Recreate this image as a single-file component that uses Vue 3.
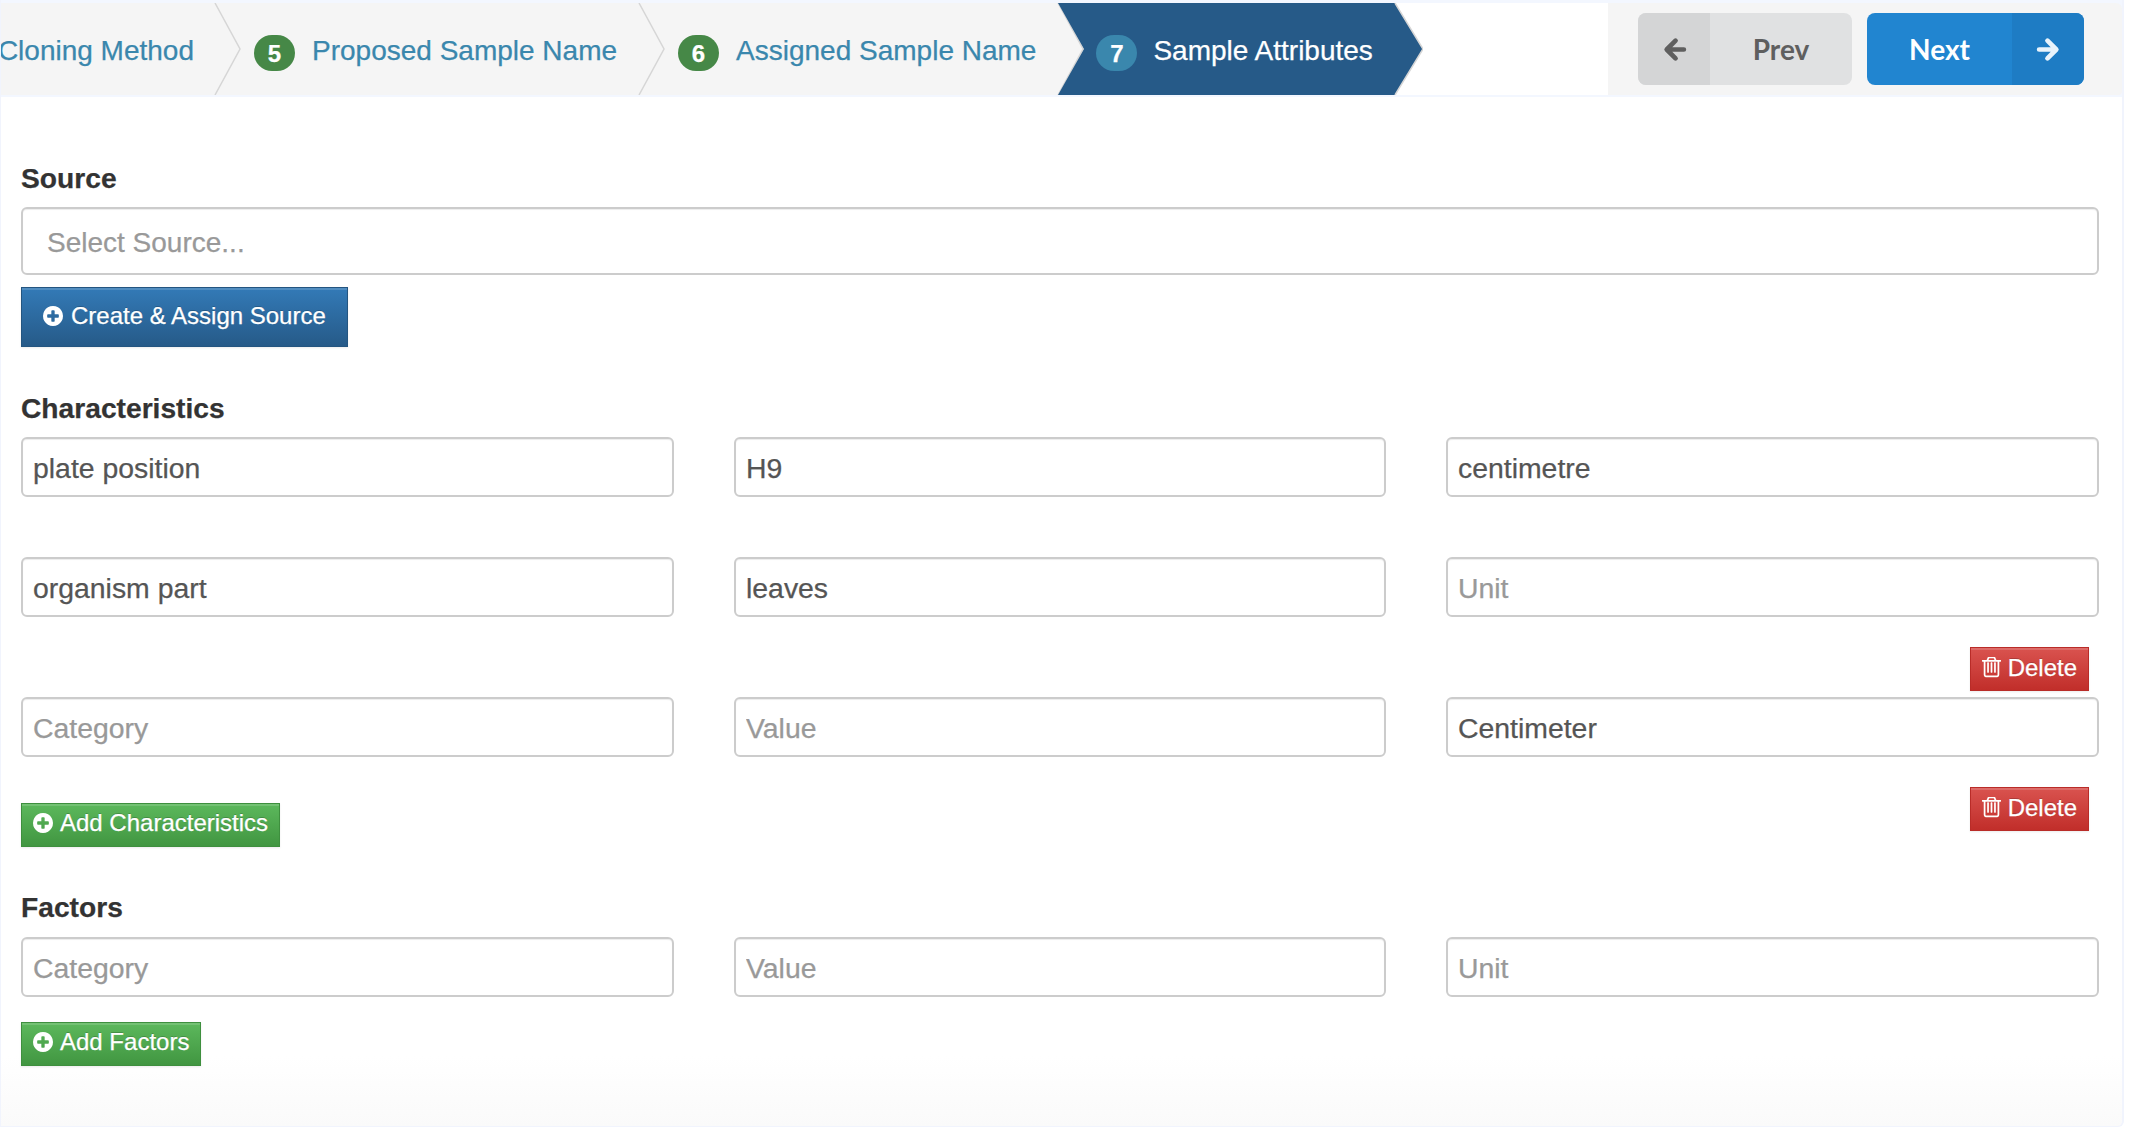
<template>
  <div class="page">
    <header class="topbar">
      <nav class="steps">
        <div class="step first">
          <span class="step-text">Cloning Method</span>
          <svg class="chevron" viewBox="0 0 27 92" preserveAspectRatio="none"><polyline points="1,0 26,46 1,92" /></svg>
        </div>
        <div class="step" v-for="s in doneSteps" :key="s.num">
          <span class="badge">{{ s.num }}</span>
          <span class="step-text">{{ s.name }}</span>
          <svg class="chevron" viewBox="0 0 27 92" preserveAspectRatio="none"><polyline points="1,0 26,46 1,92" /></svg>
        </div>
        <div class="step-active">
          <svg class="active-shape" viewBox="0 0 365 92" preserveAspectRatio="none">
            <polygon points="0,0 337,0 365,46 337,92 0,92 26,46" />
            <polyline points="337,0 365,46 337,92" />
          </svg>
          <span class="badge info">7</span>
          <span class="step-text">Sample Attributes</span>
        </div>
      </nav>
      <div class="pager">
        <button class="pager-btn prev">
          <span class="pager-icon">
            <svg class="arrow" viewBox="0 0 24 24"><path d="M13 3.500 4.500 12l8.500 8.500M5.500 12H21" /></svg>
          </span>
          <span class="pager-label">Prev</span>
        </button>
        <button class="pager-btn next">
          <span class="pager-label">Next</span>
          <span class="pager-icon">
            <svg class="arrow" viewBox="0 0 24 24"><path d="M11 3.500 19.500 12 11 20.500M18.500 12H3" /></svg>
          </span>
        </button>
      </div>
    </header>

    <main class="form">
      <h3 class="title source-title">Source</h3>
      <input class="field source-field" placeholder="Select Source..." />
      <button class="btn blue create-btn">
        <svg class="plus" viewBox="0 0 1536 1536"><path :d="plusPath" /></svg>
        Create &amp; Assign Source
      </button>

      <h3 class="title char-title">Characteristics</h3>
      <div class="row">
        <input class="field" value="plate position" placeholder="Category" />
        <input class="field" value="H9" placeholder="Value" />
        <input class="field" value="centimetre" placeholder="Unit" />
      </div>
      <div class="row second">
        <input class="field" value="organism part" placeholder="Category" />
        <input class="field" value="leaves" placeholder="Value" />
        <input class="field" placeholder="Unit" />
      </div>
      <div class="delete-line">
        <button class="btn red">
          <svg class="trash" viewBox="0 128 1408 1536"><path :d="trashPath" /></svg>
          Delete
        </button>
      </div>
      <div class="row third">
        <input class="field" placeholder="Category" />
        <input class="field" placeholder="Value" />
        <input class="field" value="Centimeter" placeholder="Unit" />
      </div>
      <div class="actions">
        <button class="btn green">
          <svg class="plus" viewBox="0 0 1536 1536"><path :d="plusPath" /></svg>
          Add Characteristics
        </button>
        <button class="btn red">
          <svg class="trash" viewBox="0 128 1408 1536"><path :d="trashPath" /></svg>
          Delete
        </button>
      </div>

      <h3 class="title factor-title">Factors</h3>
      <div class="row">
        <input class="field" placeholder="Category" />
        <input class="field" placeholder="Value" />
        <input class="field" placeholder="Unit" />
      </div>
      <button class="btn green factor-btn">
        <svg class="plus" viewBox="0 0 1536 1536"><path :d="plusPath" /></svg>
        Add Factors
      </button>
    </main>
  </div>
</template>

<script setup>
const doneSteps = [
  { num: 5, name: 'Proposed Sample Name' },
  { num: 6, name: 'Assigned Sample Name' },
]

const plusPath = 'M1216 832v-128q0-26-19-45t-45-19h-256v-256q0-26-19-45t-45-19h-128q-26 0-45 19t-19 45v256h-256q-26 0-45 19t-19 45v128q0 26 19 45t45 19h256v256q0 26 19 45t45 19h128q26 0 45-19t19-45v-256h256q26 0 45-19t19-45zm320-64q0 209-103 385.500t-279.500 279.500-385.500 103-385.500-103-279.500-279.500-103-385.500 103-385.500 279.500-279.500 385.500-103 385.500 103 279.500 279.500 103 385.500z'
const trashPath = 'M512 1248v-704q0-14-9-23t-23-9h-64q-14 0-23 9t-9 23v704q0 14 9 23t23 9h64q14 0 23-9t9-23zm256 0v-704q0-14-9-23t-23-9h-64q-14 0-23 9t-9 23v704q0 14 9 23t23 9h64q14 0 23-9t9-23zm256 0v-704q0-14-9-23t-23-9h-64q-14 0-23 9t-9 23v704q0 14 9 23t23 9h64q14 0 23-9t9-23zm128 168v-948h-896v948q0 22 7 40.500t14.500 27 10.500 8.500h832q3 0 10.500-8.500t14.500-27 7-40.500zm-672-1076h448l-48-117q-7-9-17-11h-317q-10 2-17 11zm928 32v64q0 14-9 23t-23 9h-96v948q0 83-47 143.500t-113 60.500h-832q-66 0-113-58.500t-47-141.500v-952h-96q-14 0-23-9t-9-23v-64q0-14 9-23t23-9h309l70-167q15-37 54-63t79-26h320q40 0 79 26t54 63l70 167h309q14 0 23 9t9 23z'
</script>

<style>
html,
body {
  margin: 0;
  background: #fff;
}
</style>

<style scoped>
.page {
  box-sizing: border-box;
  width: 2124px;
  height: 1127px;
  overflow: hidden;
  font-family: "Liberation Sans", Arial, sans-serif;
  -webkit-text-stroke: 0.25px;
  color: #333;
  background: linear-gradient(#fff calc(100% - 70px), #fafafa);
  border: solid #f1f4fd;
  border-width: 0 2px 1px 1px;
  border-bottom-right-radius: 6px;
}

.topbar {
  display: flex;
  height: 92px;
  padding-top: 3px;
  padding-bottom: 2px;
  background: #f3f7ff;
}

.steps {
  display: flex;
  flex: none;
  width: 1607px;
  background: #fff;
}

.step {
  display: flex;
  align-items: center;
  padding-left: 13px;
  background: #f5f5f5;
}

.step.first {
  justify-content: flex-end;
  width: 241px;
  margin-left: -1px;
  padding-left: 0;
}

.step.first .chevron {
  margin-left: 20px;
}

.step-text {
  margin-top: 3px;
  font-size: 28px;
  color: #3a87ad;
  white-space: nowrap;
}

.badge {
  flex: none;
  width: 41px;
  height: 36px;
  margin-top: 8px;
  margin-right: 17px;
  border-radius: 18px;
  background: #468847;
  color: #fff;
  font-size: 24px;
  font-weight: 700;
  line-height: 37px;
  text-align: center;
}

.badge.info {
  background: #3a87ad;
  margin-right: 16px;
}

.chevron {
  flex: none;
  width: 27px;
  height: 92px;
  margin-left: 21px;
}

.chevron polyline {
  fill: none;
  stroke: #d6d6d6;
  stroke-width: 1.5;
}

.step-active {
  position: relative;
  display: flex;
  align-items: center;
  flex: none;
  width: 365px;
  margin-left: -26px;
  padding-left: 38px;
  box-sizing: border-box;
}

.active-shape {
  position: absolute;
  inset: 0;
  width: 100%;
  height: 100%;
}

.active-shape polygon {
  fill: #265a88;
}

.active-shape polyline {
  fill: none;
  stroke: #d6d6d6;
  stroke-width: 1.5;
}

.step-active .badge,
.step-active .step-text {
  position: relative;
}

.step-active .step-text {
  color: #fff;
}

.pager {
  flex: 1;
  display: flex;
  gap: 15px;
  padding: 10px 0 0 30px;
  background: #f5f5f5;
  border-top-right-radius: 6px;
  border-bottom-right-radius: 4px;
}

.pager-btn {
  display: flex;
  align-items: stretch;
  height: 72px;
  padding: 0;
  border: 0;
  border-radius: 8px;
  overflow: hidden;
  font-family: Lato, "Liberation Sans", sans-serif;
  font-size: 28px;
  font-weight: 700;
  -webkit-text-stroke: 0;
}

.pager-icon {
  display: flex;
  align-items: center;
  justify-content: center;
  width: 72px;
}

.pager-label {
  flex: 1;
  display: flex;
  align-items: center;
  justify-content: center;
}

.prev {
  width: 214px;
  background: #e0e1e2;
  color: #5f5f5f;
}

.prev .pager-icon {
  background: #d4d5d6;
}

.next {
  width: 217px;
  background: #2185d0;
  color: #fff;
}

.next .pager-icon {
  width: 72px;
  background: #1e7cc4;
}

.arrow {
  width: 25px;
  height: 25px;
  fill: none;
  stroke: currentColor;
  stroke-width: 4.5;
  stroke-linecap: round;
  stroke-linejoin: round;
}

.next .arrow {
  stroke: #e9f3fb;
}

.form {
  padding: 0 23px 0 20px;
}

.title {
  margin: 0;
  font-size: 28.2px;
  font-weight: 700;
  line-height: 32px;
  color: #333;
}

.source-title {
  margin-top: 65px;
  margin-bottom: 13px;
}

.char-title {
  margin-top: 45px;
  margin-bottom: 13px;
}

.factor-title {
  margin-top: 44px;
  margin-bottom: 14px;
}

.field {
  box-sizing: border-box;
  display: block;
  width: 100%;
  min-width: 0;
  height: 60px;
  padding: 3px 10px 0;
  border: 2px solid #ccc;
  border-radius: 6px;
  font-family: inherit;
  font-size: 28.4px;
  color: #555;
  background: #fff;
  box-shadow: inset 0 1px 1px rgba(0, 0, 0, 0.075);
  outline: none;
}

.field::placeholder {
  color: #999;
  opacity: 1;
}

.source-field {
  height: 68px;
  padding: 3px 24px 0;
  font-size: 28px;
}

.row {
  display: grid;
  grid-template-columns: 653px 652px 653px;
  column-gap: 60px;
}

.row.second {
  margin-top: 60px;
}

.delete-line {
  display: flex;
  justify-content: flex-end;
  margin-top: 30px;
  padding-right: 10px;
}

.row.third {
  margin-top: 6px;
}

.actions {
  display: flex;
  justify-content: space-between;
  align-items: flex-start;
  margin-top: 30px;
  padding-right: 10px;
}

.actions .green {
  margin-top: 16px;
}

.btn {
  display: inline-flex;
  align-items: center;
  gap: 7px;
  height: 44px;
  padding: 0 11px 3px;
  border: 1px solid;
  font-family: inherit;
  font-size: 24px;
  line-height: 1;
  color: #fff;
  text-shadow: 0 -1px 0 rgba(0, 0, 0, 0.2);
  box-shadow: inset 0 2px 0 rgba(255, 255, 255, 0.15), 0 1px 2px rgba(0, 0, 0, 0.08);
  white-space: nowrap;
}

.blue {
  background: linear-gradient(#337ab7, #265a88);
  border-color: #245580;
}

.green {
  padding-bottom: 5px;
  background: linear-gradient(#5cb85c, #419641);
  border-color: #3e8f3e;
}

.red {
  background: linear-gradient(#d9534f, #c12e2a);
  border-color: #b92c28;
}

.create-btn {
  height: 60px;
  margin-top: 12px;
  padding: 0 21px 2px;
  gap: 8px;
}

.factor-btn {
  margin-top: 25px;
}

.plus {
  flex: none;
  width: 20px;
  height: 20px;
  fill: currentColor;
}

.trash {
  flex: none;
  width: 19px;
  height: 21px;
  fill: currentColor;
}
</style>
